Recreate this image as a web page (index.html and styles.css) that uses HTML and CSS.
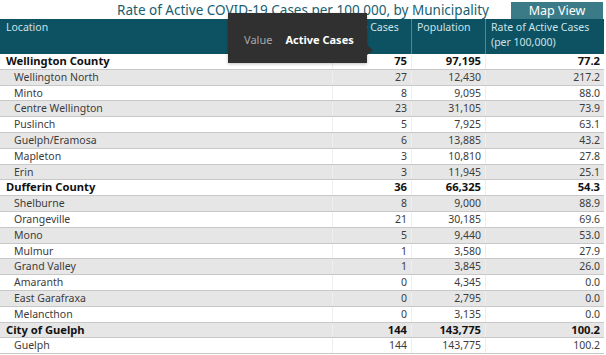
FILE: index.html
```html
<!DOCTYPE html>
<html lang="en">
<head>
  <meta charset="UTF-8" />
  <title>Active COVID-19 Cases by Municipality</title>
  <link rel="stylesheet" href="styles.css">
</head>
<body>
  <header class="topbar">
    <h1 class="title">Rate of Active COVID-19 Cases per 100,000, by Municipality</h1>
    <button class="map-btn">Map View</button>
  </header>

  <div class="grid">
    <div class="row head">
      <div class="cell">Location</div>
      <div class="cell">Active Cases</div>
      <div class="cell">Population</div>
      <div class="cell">Rate of Active Cases<br>(per 100,000)</div>
    </div>

    <!-- Wellington -->
    <div class="row group">
      <div class="cell">Wellington County</div><div class="cell num">75</div><div class="cell num">97,195</div><div class="cell num">77.2</div>
    </div>
    <div class="row child">
      <div class="cell">Wellington North</div><div class="cell num">27</div><div class="cell num">12,430</div><div class="cell num">217.2</div>
    </div>
    <div class="row child">
      <div class="cell">Minto</div><div class="cell num">8</div><div class="cell num">9,095</div><div class="cell num">88.0</div>
    </div>
    <div class="row child">
      <div class="cell">Centre Wellington</div><div class="cell num">23</div><div class="cell num">31,105</div><div class="cell num">73.9</div>
    </div>
    <div class="row child">
      <div class="cell">Puslinch</div><div class="cell num">5</div><div class="cell num">7,925</div><div class="cell num">63.1</div>
    </div>
    <div class="row child">
      <div class="cell">Guelph/Eramosa</div><div class="cell num">6</div><div class="cell num">13,885</div><div class="cell num">43.2</div>
    </div>
    <div class="row child">
      <div class="cell">Mapleton</div><div class="cell num">3</div><div class="cell num">10,810</div><div class="cell num">27.8</div>
    </div>
    <div class="row child">
      <div class="cell">Erin</div><div class="cell num">3</div><div class="cell num">11,945</div><div class="cell num">25.1</div>
    </div>

    <!-- Dufferin -->
    <div class="row group">
      <div class="cell">Dufferin County</div><div class="cell num">36</div><div class="cell num">66,325</div><div class="cell num">54.3</div>
    </div>
    <div class="row child">
      <div class="cell">Shelburne</div><div class="cell num">8</div><div class="cell num">9,000</div><div class="cell num">88.9</div>
    </div>
    <div class="row child">
      <div class="cell">Orangeville</div><div class="cell num">21</div><div class="cell num">30,185</div><div class="cell num">69.6</div>
    </div>
    <div class="row child">
      <div class="cell">Mono</div><div class="cell num">5</div><div class="cell num">9,440</div><div class="cell num">53.0</div>
    </div>
    <div class="row child">
      <div class="cell">Mulmur</div><div class="cell num">1</div><div class="cell num">3,580</div><div class="cell num">27.9</div>
    </div>
    <div class="row child">
      <div class="cell">Grand Valley</div><div class="cell num">1</div><div class="cell num">3,845</div><div class="cell num">26.0</div>
    </div>
    <div class="row child">
      <div class="cell">Amaranth</div><div class="cell num">0</div><div class="cell num">4,345</div><div class="cell num">0.0</div>
    </div>
    <div class="row child">
      <div class="cell">East Garafraxa</div><div class="cell num">0</div><div class="cell num">2,795</div><div class="cell num">0.0</div>
    </div>
    <div class="row child">
      <div class="cell">Melancthon</div><div class="cell num">0</div><div class="cell num">3,135</div><div class="cell num">0.0</div>
    </div>

    <!-- Guelph -->
    <div class="row group">
      <div class="cell">City of Guelph</div><div class="cell num">144</div><div class="cell num">143,775</div><div class="cell num">100.2</div>
    </div>
    <div class="row child">
      <div class="cell">Guelph</div><div class="cell num">144</div><div class="cell num">143,775</div><div class="cell num">100.2</div>
    </div>
  </div>

  <div class="tooltip">
    <span class="tip-key">Value</span>
    <span class="tip-val">Active Cases</span>
  </div>
</body>
</html>
```

FILE: styles.css
```css
:root {
  --teal: #0d5263;
  --teal-light: #3b7b87;
  --title: #17606f;
  --row-alt: #e6e6e6;
  --line: #c8c8c8;
  --text: #252423;
}
* { box-sizing: border-box; margin: 0; padding: 0; }
body {
  position: relative;
  width: 606px;
  height: 355px;
  overflow: hidden;
  font-family: 'Noto Sans', 'Open Sans', sans-serif;
  font-size: 10.5px;
  color: var(--text);
  background: #fff;
}

.topbar {
  display: grid;
  grid-template-columns: 1fr auto 1fr;
  align-items: center;
  height: 19px;
}
.title {
  grid-column: 2;
  font-family: 'Noto Sans', sans-serif;
  font-size: 13.5px;
  font-weight: 400;
  color: var(--title);
  line-height: 20px;
  white-space: nowrap;
}
.map-btn {
  grid-column: 3;
  justify-self: end;
  width: 92px;
  height: 17px;
  margin: 1px 3px 1px 0;
  border: none;
  background: var(--teal-light);
  color: #fff;
  font-family: 'Noto Sans', sans-serif;
  font-size: 12.5px;
  line-height: 17px;
}

.grid { width: 604px; }
.row {
  display: grid;
  grid-template-columns: 333px 79px 74px 118px;
  height: 15.8px;
  border-bottom: 1px solid var(--line);
  line-height: 14.8px;
}
.row:nth-child(odd) { background: var(--row-alt); }
.cell {
  padding: 0 4px 0 5px;
  border-right: 1px solid #eeeeee;
  white-space: nowrap;
}
.cell:first-child { padding-left: 6px; }
.cell:last-child { border-right: none; }
.num { text-align: right; }

.row.head {
  height: 35px;
  background: var(--teal);
  color: #cfe1e5;
  line-height: 15px;
  border-bottom: none;
}
.row.head .cell {
  padding-top: 1px;
  border-right-color: #4d8995;
}
.row.group { font-size: 11.2px; font-weight: 700; color: #111; }
.row.child { color: #3c3c3c; }
.row.child .cell:first-child { padding-left: 14px; }

.tooltip {
  position: absolute;
  left: 228px;
  top: 13px;
  width: 139px;
  height: 50px;
  display: flex;
  align-items: center;
  gap: 13px;
  padding: 3px 0 0 16px;
  background: #303030;
  font-size: 11px;
  box-shadow: 0 1px 3px rgba(0,0,0,0.25);
}
.tooltip::after {
  content: '';
  position: absolute;
  right: -6px;
  top: 32px;
  border-left: 6px solid #303030;
  border-top: 5px solid transparent;
  border-bottom: 5px solid transparent;
}
.tip-key { color: #a9a9a9; }
.tip-val { color: #fff; font-weight: 700; }
```
